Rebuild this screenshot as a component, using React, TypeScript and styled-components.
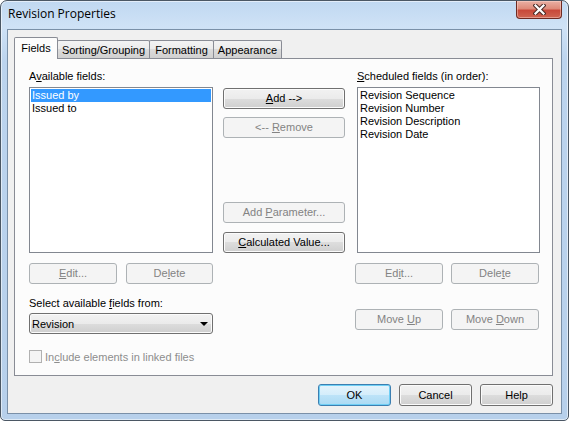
import React from 'react';
import styled, { createGlobalStyle, css } from 'styled-components';

const GlobalStyle = createGlobalStyle`
  html, body {
    margin: 0;
    padding: 0;
    background: #ffffff;
  }
  body {
    font-family: "Liberation Sans", Arial, sans-serif;
    font-size: 11px;
    color: #000000;
  }
  * {
    box-sizing: border-box;
  }
`;

const Window = styled.div`
  width: 569px;
  height: 421px;
  border: 1px solid #4b5764;
  border-radius: 7px 7px 5px 5px;
  background: linear-gradient(180deg, #c0d8f1 0px, #cfe2f6 26px, #bcd4ee 60px, #b7d0eb 100%);
  box-shadow: inset 0 0 0 1px rgba(255, 255, 255, 0.55);
  padding: 0 6px 6px;
  display: flex;
  flex-direction: column;
  overflow: hidden;
`;

const TitleBar = styled.div`
  height: 28px;
  display: flex;
  justify-content: space-between;
  align-items: flex-start;
`;

const Title = styled.span`
  font-family: "Open Sans", "Noto Sans", sans-serif;
  font-size: 12px;
  line-height: 26px;
  padding-left: 1px;
  color: #000000;
`;

const CloseButton = styled.div`
  width: 46px;
  height: 18px;
  border: 1px solid #6e2a22;
  border-top: none;
  border-radius: 0 0 4px 4px;
  background: linear-gradient(180deg, #e9b0a4 0%, #dd8a79 45%, #c8493a 55%, #cf6552 100%);
  box-shadow: inset 0 0 0 1px rgba(255, 220, 210, 0.45);
  display: flex;
  align-items: center;
  justify-content: center;
`;

const Client = styled.div`
  flex: 1;
  border: 1px solid #7a90a8;
  background: #f0f0f0;
  padding: 7px 8px 0 6px;
  display: flex;
  flex-direction: column;
`;

const TabStrip = styled.div`
  display: flex;
  align-items: flex-end;
  height: 21px;
  position: relative;
  z-index: 1;
`;

const Tab = styled.div<{ $active?: boolean; $w: number }>`
  width: ${(p) => p.$w}px;
  height: ${(p) => (p.$active ? 22 : 18)}px;
  margin-bottom: ${(p) => (p.$active ? -1 : 0)}px;
  border: 1px solid #898c95;
  border-bottom: none;
  border-radius: 2px 2px 0 0;
  display: flex;
  align-items: center;
  justify-content: center;
  white-space: nowrap;
  & + & {
    margin-left: -1px;
  }
  ${(p) =>
    p.$active
      ? css`
          background: #fcfcfc;
          z-index: 2;
          padding-bottom: 2px;
        `
      : css`
          background: linear-gradient(180deg, #f3f3f3 0%, #ebebeb 50%, #dcdcdc 50%, #d0d0d0 100%);
          padding-top: 1px;
        `}
`;

const TabPanel = styled.div`
  height: 318px;
  border: 1px solid #898c95;
  background: #fcfcfc;
  padding: 11px 0 0 14px;
  display: grid;
  grid-template-columns: 184px 122px 185px;
  column-gap: 10px;
  align-items: start;
`;

const Column = styled.div`
  display: flex;
  flex-direction: column;
`;

const FieldLabel = styled.div<{ $indent?: number; $top?: number }>`
  height: 13px;
  line-height: 13px;
  white-space: nowrap;
  padding-left: ${(p) => p.$indent ?? 0}px;
  margin-top: ${(p) => p.$top ?? 0}px;
`;

const ListBox = styled.div<{ $indent?: number }>`
  height: 166px;
  margin-top: 4px;
  margin-left: ${(p) => p.$indent ?? 0}px;
  border: 1px solid #828790;
  background: #ffffff;
  padding: 1px;
`;

const ListItem = styled.div<{ $selected?: boolean }>`
  height: 13px;
  line-height: 13px;
  padding-left: 1px;
  white-space: nowrap;
  ${(p) =>
    p.$selected &&
    css`
      background: #3399ff;
      color: #ffffff;
    `}
`;

const Button = styled.button<{ $w: number; $h?: number; $top?: number; $default?: boolean }>`
  display: block;
  width: ${(p) => p.$w}px;
  height: ${(p) => p.$h ?? 21}px;
  line-height: ${(p) => (p.$h ?? 21) - 2}px;
  margin-top: ${(p) => p.$top ?? 0}px;
  padding: 0;
  font-family: "Liberation Sans", Arial, sans-serif;
  font-size: 11px;
  text-align: center;
  color: #000000;
  border: 1px solid #707070;
  border-radius: 3px;
  background: linear-gradient(180deg, #f2f2f2 0%, #ebebeb 50%, #dddddd 50%, #cfcfcf 100%);
  box-shadow: inset 0 0 0 1px #fbfbfb;
  white-space: pre;
  &:disabled {
    color: #838383;
    border-color: #adb2b5;
    background: #f4f4f4;
    box-shadow: none;
  }
  ${(p) =>
    p.$default &&
    css`
      border-color: #3c7fb1;
      background: linear-gradient(180deg, #e5f4fc 0%, #d4edfb 50%, #bde3f8 50%, #abdaf3 100%);
      box-shadow: inset 0 0 0 1px #6fcff5;
    `}
`;

const ButtonRow = styled.div<{ $gap: number; $top: number }>`
  display: flex;
  gap: ${(p) => p.$gap}px;
  margin-top: ${(p) => p.$top}px;
`;

const Combo = styled.div`
  width: 184px;
  height: 21px;
  margin-top: 3px;
  border: 1px solid #707070;
  border-radius: 3px;
  background: linear-gradient(180deg, #f2f2f2 0%, #ebebeb 50%, #dddddd 50%, #cfcfcf 100%);
  box-shadow: inset 0 0 0 1px #fbfbfb;
  display: flex;
  align-items: center;
  justify-content: space-between;
  padding: 0 4px 0 2px;
`;

const Arrow = styled.span`
  width: 0;
  height: 0;
  border-left: 4px solid transparent;
  border-right: 4px solid transparent;
  border-top: 4px solid #000000;
`;

const CheckRow = styled.label`
  display: flex;
  align-items: center;
  gap: 3px;
  margin-top: 16px;
  height: 13px;
  color: #8d8d8d;
`;

const CheckBox = styled.span`
  width: 13px;
  height: 13px;
  border: 1px solid #b1b1b1;
  background: #f4f4f4;
`;

const ButtonBar = styled.div`
  display: flex;
  justify-content: flex-end;
  gap: 8px;
  margin-top: 8px;
`;

const App: React.FC = () => {
  return (
    <>
      <GlobalStyle />
      <Window>
        <TitleBar>
          <Title>Revision Properties</Title>
          <CloseButton>
            <svg width="13" height="11" viewBox="0 0 13 11">
              <path d="M2.5 1.5 L10.5 9.5 M10.5 1.5 L2.5 9.5" stroke="#4a2a26" strokeWidth="4.2" strokeLinecap="square" />
              <path d="M2.5 1.5 L10.5 9.5 M10.5 1.5 L2.5 9.5" stroke="#ffffff" strokeWidth="2.2" strokeLinecap="square" />
            </svg>
          </CloseButton>
        </TitleBar>

        <Client>
          <TabStrip>
            <Tab $active $w={44}>Fields</Tab>
            <Tab $w={93}>Sorting/Grouping</Tab>
            <Tab $w={65}>Formatting</Tab>
            <Tab $w={69}>Appearance</Tab>
          </TabStrip>

          <TabPanel>
            <Column>
              <FieldLabel>
                A<u>v</u>ailable fields:
              </FieldLabel>
              <ListBox>
                <ListItem $selected>Issued by</ListItem>
                <ListItem>Issued to</ListItem>
              </ListBox>
              <ButtonRow $gap={9} $top={10}>
                <Button $w={88} disabled>
                  <u>E</u>dit...
                </Button>
                <Button $w={87} disabled>
                  De<u>l</u>ete
                </Button>
              </ButtonRow>
              <FieldLabel $top={13}>
                Select available <u>f</u>ields from:
              </FieldLabel>
              <Combo>
                <span>Revision</span>
                <Arrow />
              </Combo>
              <CheckRow>
                <CheckBox />
                <span>
                  In<u>c</u>lude elements in linked files
                </span>
              </CheckRow>
            </Column>

            <Column>
              <Button $w={122} $top={18}>
                <u>A</u>dd --&gt;
              </Button>
              <Button $w={122} $top={8} disabled>
                {'<-- '}<u>R</u>emove
              </Button>
              <Button $w={122} $top={64} disabled>
                {'Add '}<u>P</u>arameter...
              </Button>
              <Button $w={122} $top={9}>
                <u>C</u>alculated Value...
              </Button>
            </Column>

            <Column>
              <FieldLabel $indent={2}>
                <u>S</u>cheduled fields (in order):
              </FieldLabel>
              <ListBox $indent={2}>
                <ListItem>Revision Sequence</ListItem>
                <ListItem>Revision Number</ListItem>
                <ListItem>Revision Description</ListItem>
                <ListItem>Revision Date</ListItem>
              </ListBox>
              <ButtonRow $gap={8} $top={10}>
                <Button $w={88} disabled>
                  Ed<u>i</u>t...
                </Button>
                <Button $w={88} disabled>
                  Dele<u>t</u>e
                </Button>
              </ButtonRow>
              <ButtonRow $gap={8} $top={25}>
                <Button $w={88} disabled>
                  {'Move '}<u>U</u>p
                </Button>
                <Button $w={88} disabled>
                  {'Move '}<u>D</u>own
                </Button>
              </ButtonRow>
            </Column>
          </TabPanel>

          <ButtonBar>
            <Button $w={73} $h={22} $default>
              OK
            </Button>
            <Button $w={73} $h={22}>
              Cancel
            </Button>
            <Button $w={73} $h={22}>
              Help
            </Button>
          </ButtonBar>
        </Client>
      </Window>
    </>
  );
};

export default App;
